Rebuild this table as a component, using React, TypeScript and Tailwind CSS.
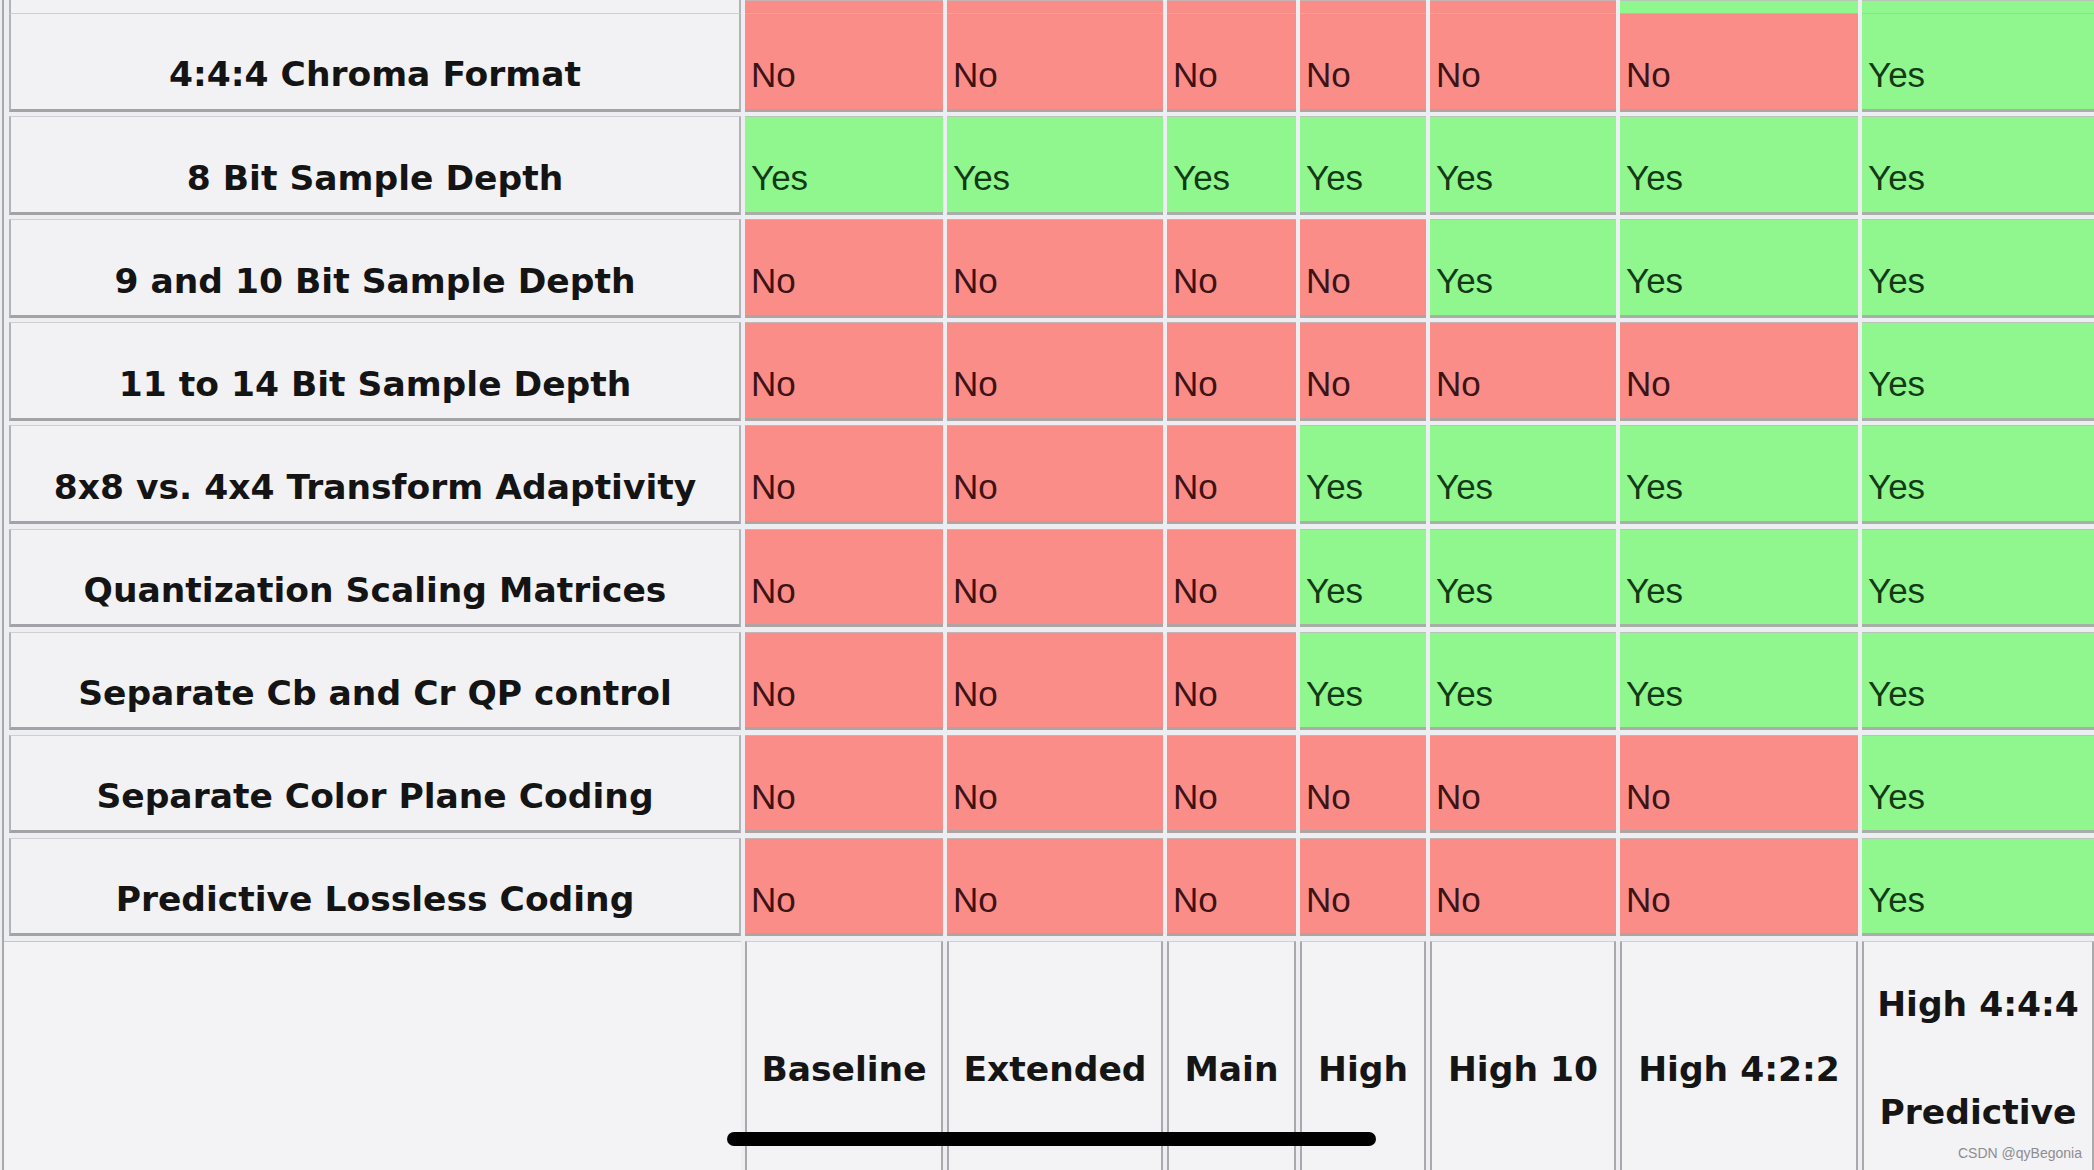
const cols =
  "grid grid-cols-[732px_198px_216px_129px_126px_186px_238px_1fr] gap-x-[4px]";

const rows: { label: string; v: boolean[] }[] = [
  { label: "4:4:4 Chroma Format", v: [false, false, false, false, false, false, true] },
  { label: "8 Bit Sample Depth", v: [true, true, true, true, true, true, true] },
  { label: "9 and 10 Bit Sample Depth", v: [false, false, false, false, true, true, true] },
  { label: "11 to 14 Bit Sample Depth", v: [false, false, false, false, false, false, true] },
  { label: "8x8 vs. 4x4 Transform Adaptivity", v: [false, false, false, true, true, true, true] },
  { label: "Quantization Scaling Matrices", v: [false, false, false, true, true, true, true] },
  { label: "Separate Cb and Cr QP control", v: [false, false, false, true, true, true, true] },
  { label: "Separate Color Plane Coding", v: [false, false, false, false, false, false, true] },
  { label: "Predictive Lossless Coding", v: [false, false, false, false, false, false, true] },
];

const topRow = [false, false, false, false, false, true, true];

const profiles = ["Baseline", "Extended", "Main", "High", "High 10", "High 4:2:2"];

const Cell = ({ yes, children }: { yes: boolean; children?: React.ReactNode }) => (
  <div
    className={
      yes
        ? "h-full bg-[#90f68e] border-b-[3px] border-b-[#a7b0a7] border-t border-t-[#b9c4b9] flex items-center pl-[6px] pt-[28px] text-[#123a16]"
        : "h-full bg-[#fb8d88] border-b-[3px] border-b-[#b0a3a3] border-t border-t-[#c7b3b3] flex items-center pl-[6px] pt-[28px] text-[#3d1316]"
    }
  >
    {children}
  </div>
);

const HeadCell = ({ children }: { children: React.ReactNode }) => (
  <div className="h-full bg-[#f3f2f4] border-x-2 border-[#a9a9ad] border-t border-t-[#d0d0d4] flex flex-col items-center text-[34.5px] leading-[40px] font-bold text-[#151515]">
    {children}
  </div>
);

export default function App() {
  return (
    <div
      className="relative w-[2094px] h-[1170px] overflow-hidden bg-[#eceef1]"
      style={{ fontFamily: "'Liberation Sans', Arial, sans-serif" }}
    >
      <div className="ml-[2px] border-l-2 border-[#a9a9ad] h-full flex flex-col gap-[4.5px]">
        {/* partial row cut at the top */}
        <div className={`${cols} h-[8.5px] ml-[5px]`}>
          <div className="bg-[#f2f1f3] border-x-2 border-[#b3b3b7] border-b-[3px] border-b-[#a3a3a7]" />
          {topRow.map((y, i) => (
            <Cell key={i} yes={y} />
          ))}
        </div>

        {rows.map((r) => (
          <div key={r.label} className={`${cols} h-[99px] ml-[5px] text-[35px]`}>
            <div
              className="h-full bg-[#f2f1f3] border-x-2 border-[#b3b3b7] border-t border-t-[#cfcfd3] border-b-[3px] border-b-[#a3a3a7] flex items-center justify-center pt-[28px] text-[34.5px] font-bold text-[#141414]"
              style={{ fontFamily: "'DejaVu Sans', Verdana, sans-serif" }}
            >
              {r.label}
            </div>
            {r.v.map((y, i) => (
              <Cell key={i} yes={y}>
                {y ? "Yes" : "No"}
              </Cell>
            ))}
          </div>
        ))}

        <div
          className={`${cols} h-[230px] ml-[5px]`}
          style={{ fontFamily: "'DejaVu Sans', Verdana, sans-serif" }}
        >
          <div className="-ml-[5px] bg-[#f3f2f4] border-t border-t-[#c6c6ca]" />
          {profiles.map((p) => (
            <HeadCell key={p}>
              <span className="pt-[107px]">{p}</span>
            </HeadCell>
          ))}
          <HeadCell>
            <span className="pt-[42px]">High 4:4:4</span>
            <span className="pt-[68px]">Predictive</span>
          </HeadCell>
        </div>
      </div>

      {/* home indicator */}
      <div className="absolute left-[727px] top-[1132px] w-[649px] h-[14px] rounded-full bg-black" />

      {/* watermark */}
      <div className="absolute left-[1958px] top-[1145px] text-[14px] leading-[16px] text-[#8d8d90]">
        CSDN @qyBegonia
      </div>
    </div>
  );
}
